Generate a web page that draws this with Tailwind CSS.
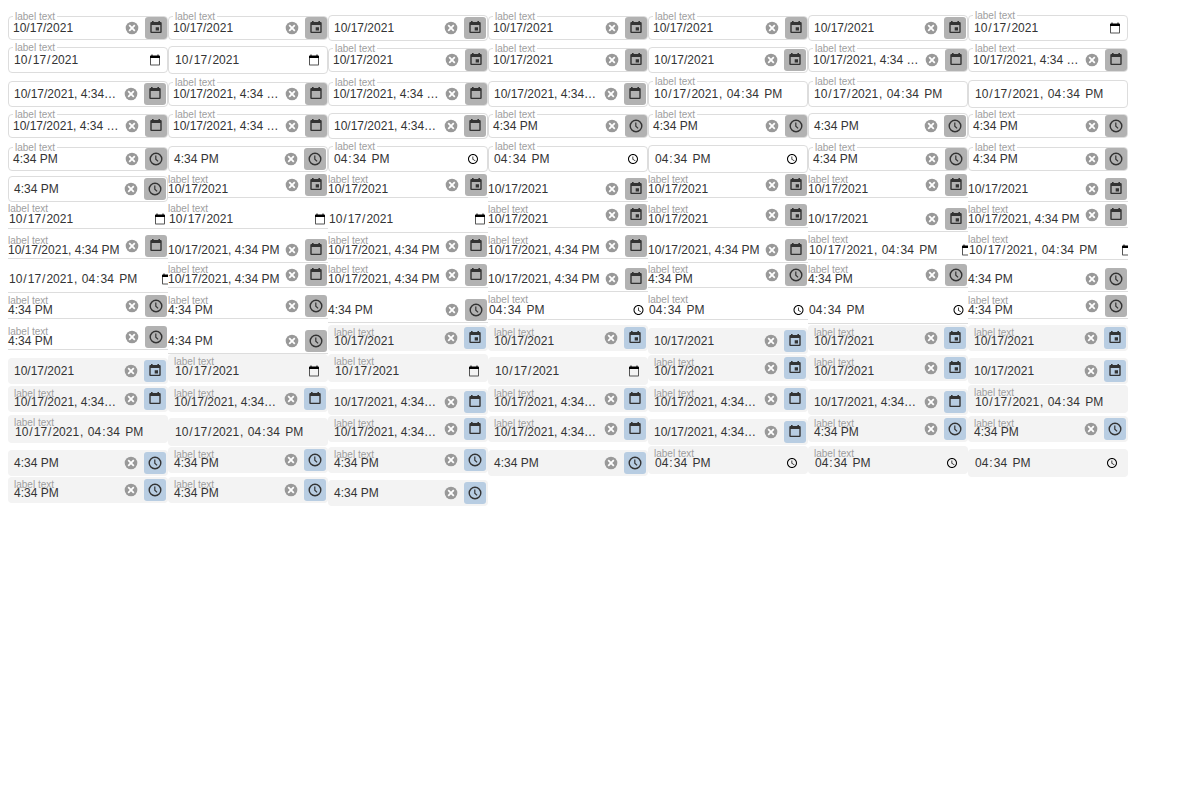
<!DOCTYPE html>
<html lang="en">
<head>
<meta charset="utf-8">
<title>Date boxes</title>
<script src="https://cdn.jsdelivr.net/npm/@tailwindcss/browser@4"></script>
</head>
<body class="bg-white text-[#333] font-['Liberation_Sans',Arial,sans-serif] text-[12px] leading-[16px]">
<svg class="hidden">
  <symbol id="event" viewBox="0 0 12 12"><path d="M2 0h1.600v1h4.800V0H10v1h.6q1.100 0 1.100 1.100v8.800q0 1.100-1.100 1.100H1.400q-1.100 0-1.100-1.100V2.100q0-1.100 1.100-1.100H2zM1.700 4v6.700h8.600V4zM5.700 6.300h3.300v3.300H5.700z" fill="#333" fill-rule="evenodd"/></symbol>
  <symbol id="calendar" viewBox="0 0 12 12"><path d="M2 0h1.600v1h4.800V0H10v1h.6q1.100 0 1.100 1.100v8.800q0 1.100-1.100 1.100H1.400q-1.100 0-1.100-1.100V2.100q0-1.100 1.100-1.100H2zM1.700 4v6.700h8.600V4z" fill="#333" fill-rule="evenodd"/></symbol>
  <symbol id="clock" viewBox="0 0 14 14"><circle cx="7" cy="7" r="5.800" fill="none" stroke="#333" stroke-width="1.400"/><path d="M6.800 3.600V7.200L9.100 9.400" fill="none" stroke="#333" stroke-width="1.200"/></symbol>
  <symbol id="clear" viewBox="0 0 14 14"><circle cx="7" cy="7" r="6.300" fill="#999"/><path d="M4.200 4.200L9.800 9.800M9.800 4.200L4.200 9.800" fill="none" stroke="#fff" stroke-width="1.800"/></symbol>
  <symbol id="nativecal" viewBox="0 0 24 24"><path d="M20 3h-1V1h-2v2H7V1H5v2H4c-1.100 0-2 .9-2 2v3h20V5c0-1.100-.9-2-2-2z" fill="#000"/><path d="M2 8v13c0 1.100.9 2 2 2h16c1.100 0 2-.9 2-2V8h-2v13H4V8z" fill="#555"/></symbol>
  <symbol id="nativeclock" viewBox="0 0 24 24"><path d="M11.990 2C6.470 2 2 6.480 2 12s4.470 10 9.990 10C17.520 22 22 17.520 22 12S17.520 2 11.990 2zM12 20c-4.420 0-8-3.580-8-8s3.580-8 8-8 8 3.580 8 8-3.580 8-8 8zM12.500 7H11v6l5.250 3.150.75-1.230-4.500-2.670z" fill="#000"/></symbol>
</svg>
<main id="list" class="pt-[11px] pl-2"></main>
<script>
// Field code: style (O outlined, U underlined, F filled), label flag, kind (n prefix = browser-native editor)
const rows = [
  [32, 'O1d O1d O0d O1d O1d O0d O1nd'],
  [34, 'O1nd O0nd O1d O1d O0d O1D O1D'],
  [32, 'O0D O1D O1D O0D O1nD O1nD O0nD'],
  [33, 'O1D O1D O0D O1t O1t O0t O1t'],
  [30, 'O1t O0t O1nt O1nt O0nt O1t O1t'],
  [30, 'O0t U1d U1d U0d U1d U1d U0d'],
  [31, 'U1nd U1nd U0nd U1d U1d U0d U1D'],
  [29, 'U1D U0D U1D U1D U0D U1nD U1nD'],
  [31, 'U0nD U1D U1D U0D U1t U1t U0t'],
  [31, 'U1t U1t U0t U1nt U1nt U0nt U1t'],
  [30, 'U1t U0t F1d F1d F0d F1d F1d'],
  [31, 'F0d F1nd F1nd F0nd F1d F1d F0d'],
  [30, 'F1D F1D F0D F1D F1D F0D F1nD'],
  [31, 'F1nD F0nD F1D F1D F0D F1t F1t'],
  [30, 'F0t F1t F1t F0t F1nt F1nt F0nt'],
  [30, 'F1t F1t F0t'],
];
const box = {
  O1: 'mt-[5px] h-[24px] border border-[#ddd] rounded-[4px] pl-[4px]',
  O0: 'mt-[4px] h-[26px] border border-[#ddd] rounded-[4px] pl-[5px] pr-px',
  O1n: 'mt-[4px] h-[26px] border border-[#ddd] rounded-[4px] pl-[4px] pr-[6px]',
  O0n: 'mt-[3px] h-[28px] border border-[#ddd] rounded-[4px] pl-[5px] pr-[7px]',
  U1: 'mt-px h-[25px] border-b border-[#ddd] pr-px pt-px',
  U0: 'mt-[5px] h-[25px] border-b border-[#ddd] pr-px pt-px',
  U1n: 'mt-px h-[26px] border-b border-[#ddd] pr-[2px]',
  U0n: 'mt-[4px] h-[27px] border-b border-[#ddd] pr-[2px]',
  F1: 'mt-px h-[26px] bg-[#f3f3f3] rounded-[4px] pl-[6px] pr-[2px]',
  F0: 'mt-[4px] h-[26px] bg-[#f3f3f3] rounded-[4px] pl-[6px] pr-[2px]',
  F1n: 'h-[28px] bg-[#f3f3f3] rounded-[4px] pl-[6px] pr-[8px]',
  F0n: 'mt-[3px] h-[28px] bg-[#f3f3f3] rounded-[4px] pl-[6px] pr-[8px]',
};
// Where the value's line starts inside the box
const line = {
  O1: 'mt-[3px]', O0: 'mt-[4px]', O1n: 'mt-[4px]', O0n: 'mt-[5px]',
  U1: 'mt-[7px]', U0: 'mt-[3px]', U1n: 'mt-[8px]', U0n: 'mt-[5px]',
  F1: 'mt-[8px]', F0: 'mt-[5px]', F1n: 'mt-[9px]', F0n: 'mt-[6px]',
};
const label = {
  O1: 'left-[4px] -top-[7px] px-[2px] bg-white', O1n: 'left-[4px] -top-[7px] px-[2px] bg-white',
  U1: 'left-0 top-0', U1n: 'left-0 -top-px',
  F1: 'left-[6px] top-px', F1n: 'left-[6px] top-px',
};
const text = { d: '10/17/2021', D: '10/17/2021, 4:34 PM', t: '4:34 PM' };
const f = s => `<span class="px-px">${s}</span>`;
const date = f('10') + '/' + f('17') + '/' + f('2021');
const time = f('04') + ':' + f('34') + ' ' + f('PM');
const native = { d: date, D: date + ', ' + time, t: time };
const glyph = { d: 'event', D: 'calendar', t: 'clock' };

function cell(code) {
  const s = code[0], lab = code[1] === '1', nat = code[2] === 'n', k = code.at(-1);
  const key = code.slice(0, 2) + (nat ? 'n' : '');
  let h = `<div class="relative flex w-[160px] shrink-0 items-start whitespace-pre ${box[key]}">`;
  if (lab) h += `<span class="absolute text-[10px] leading-[14px] text-[#9e9e9e] ${label[key]}">label text</span>`;
  if (nat) {
    h += `<span class="relative grow ${line[key]}">${native[k]}</span>`;
    if (k === 'd') h += `<svg class="size-[12px] shrink-0 translate-y-[2px] ${line[key]}"><use href="#nativecal"/></svg>`;
    if (k === 't') h += `<svg class="size-[12px] shrink-0 translate-y-[2px] ${s === 'U' ? '-translate-x-[1.5px]' : '-translate-x-[2px]'} ${line[key]}"><use href="#nativeclock"/></svg>`;
    if (k === 'D' && s === 'U') h += `<span class="flex w-[7px] -mr-[2px] shrink-0 overflow-hidden ${line[key]}"><svg class="size-[12px] mt-[2px] shrink-0"><use href="#nativecal"/></svg></span>`;
  } else {
    let t = text[k];
    if (k === 'D' && s !== 'U') t = key === 'O1' ? '10/17/2021, 4:34 …' : '10/17/2021, 4:34…';
    h += `<span class="relative grow ${line[key]}">${t}</span>`;
    h += `<svg class="size-[14px] shrink-0 mr-[6px] ${s === 'F' ? 'mt-[6px]' : 'mt-[4px]'} ${key === 'O0' ? 'translate-y-px' : ''}"><use href="#clear"/></svg>`;
    h += `<span class="flex size-[22px] shrink-0 items-center justify-center rounded-[3px] ${s === 'F' ? 'bg-[#b8cde2] mt-[2px]' : 'bg-[#b2b2b2]'} ${key === 'O0' ? 'mt-px' : ''}">`;
    h += k === 't' ? `<svg class="size-[14px]"><use href="#clock"/></svg>` : `<svg class="size-[12px] -translate-y-px"><use href="#${glyph[k]}"/></svg>`;
    h += `</span>`;
  }
  return h + '</div>';
}
document.getElementById('list').innerHTML = rows.map(([height, codes]) =>
  `<div class="flex items-start" style="height:${height}px">${codes.split(' ').map(cell).join('')}</div>`).join('');
</script>
</body>
</html>
